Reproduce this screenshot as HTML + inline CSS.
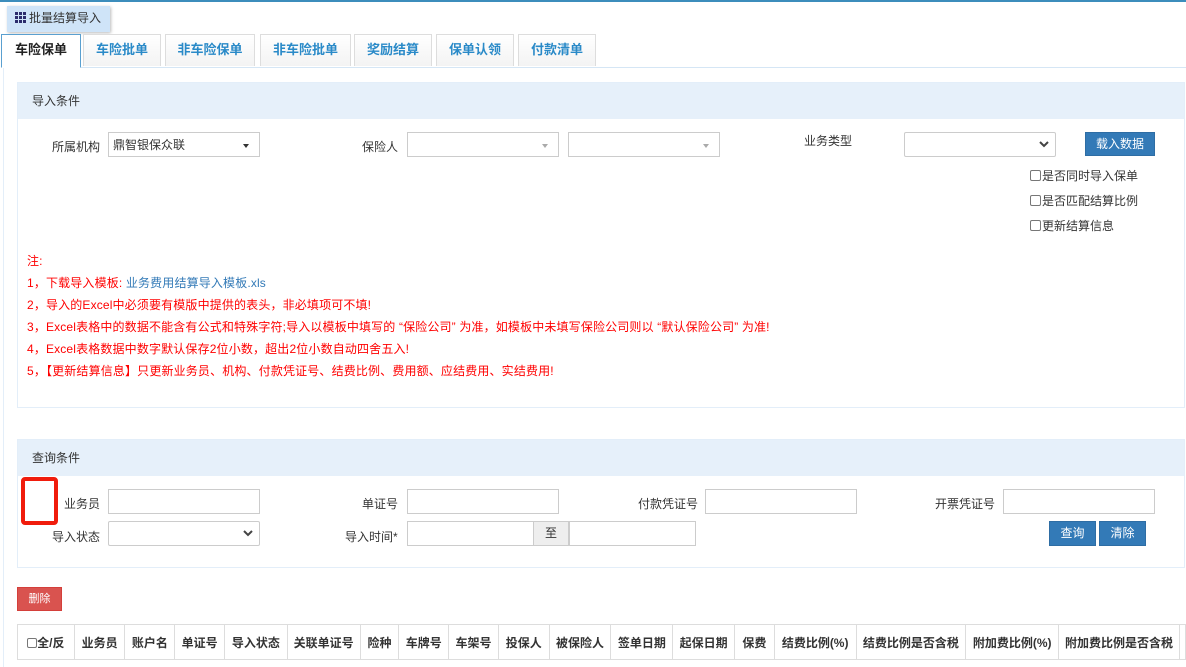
<!DOCTYPE html>
<html><head><meta charset="utf-8"><style>
*{margin:0;padding:0;box-sizing:border-box}
body{width:1186px;height:664px;overflow:hidden;background:#fff;font-family:"Liberation Sans","Noto Sans CJK SC",sans-serif;font-size:12px;color:#333;position:relative}
.a{position:absolute}
.inp{position:absolute;border:1px solid #ccc;background:#fff;height:25px}
.lbl{position:absolute;font-size:12px;color:#333;white-space:nowrap}
.tab{position:absolute;top:34px;height:32px;border:1px solid #ddd;border-bottom:none;background:linear-gradient(#fff,#f3f3f3);color:#2a8ac8;font-weight:bold;font-size:13px;text-align:center;line-height:30px}
.sec{position:absolute;left:17px;width:1168px;border:1px solid #e3eef9;background:#fff}
.sech{height:36px;background:#e6f0fa;padding-left:14px;line-height:36px;color:#333}
.btn{position:absolute;background:#337ab7;border:1px solid #2e6da4;color:#fff;text-align:center;line-height:22px;font-size:12px}
.cb{position:absolute;font-size:12px;white-space:nowrap}
.cb i{display:inline-block;width:11px;height:11px;border:1px solid #777;border-radius:2px;vertical-align:-1px;margin-right:1px}
.note{position:absolute;left:27px;color:#f00;font-size:12px;white-space:nowrap;letter-spacing:0.15px}
table{position:absolute;left:17px;top:624px;border-collapse:collapse}
td{border:1px solid #ddd;height:35px;text-align:center;font-weight:bold;font-size:12px;white-space:nowrap;padding:0}
.caret{position:absolute;right:10px;top:11px;border:3px solid transparent;border-top:4px solid #333;border-bottom:0}
.chev{position:absolute;right:6px;top:8px}
</style></head><body>
<div class="a" style="left:0;top:0;width:1186px;height:2px;background:#3c8dbc"></div>
<div class="a" style="left:7px;top:6px;width:103px;height:26px;background:#cfe4f8;box-shadow:1px 1px 3px #bbb;line-height:25px;padding-left:8px;font-size:12px">
<svg width="11" height="11" style="vertical-align:-1px;margin-right:3px"><g fill="#2c2c6c"><rect x="0" y="0" width="3" height="3"/><rect x="4" y="0" width="3" height="3"/><rect x="8" y="0" width="3" height="3"/><rect x="0" y="4" width="3" height="3"/><rect x="4" y="4" width="3" height="3"/><rect x="8" y="4" width="3" height="3"/><rect x="0" y="8" width="3" height="3"/><rect x="4" y="8" width="3" height="3"/><rect x="8" y="8" width="3" height="3"/></g></svg>批量结算导入</div>

<div class="a" style="left:3px;top:67px;width:1183px;height:600px;border-left:1px solid #e3eef9;border-top:1px solid #d5e6f5"></div>
<div class="tab" style="left:1px;width:80px;background:#fff;color:#222;border-color:#5aa0d0;border-bottom:1px solid #fff;height:34px">车险保单</div>
<div class="tab" style="left:83px;width:78px">车险批单</div>
<div class="tab" style="left:165px;width:90px">非车险保单</div>
<div class="tab" style="left:260px;width:91px">非车险批单</div>
<div class="tab" style="left:354px;width:78px">奖励结算</div>
<div class="tab" style="left:436px;width:78px">保单认领</div>
<div class="tab" style="left:518px;width:78px">付款清单</div>

<div class="sec" style="top:82px;height:326px"><div class="sech">导入条件</div></div>
<div class="lbl" style="left:52px;top:138px">所属机构</div>
<div class="inp" style="left:108px;top:132px;width:152px;padding:3px 4px">鼎智银保众联<span class="caret"></span></div>
<div class="lbl" style="left:362px;top:138px">保险人</div>
<div class="inp" style="left:407px;top:132px;width:152px"><span class="caret" style="border-top-color:#aaa"></span></div>
<div class="inp" style="left:568px;top:132px;width:152px"><span class="caret" style="border-top-color:#aaa"></span></div>
<div class="lbl" style="left:804px;top:132px">业务类型</div>
<div class="inp" style="left:904px;top:132px;width:152px;border-radius:2px"><svg class="chev" width="10" height="7"><polyline points="1,1 5,5 9,1" fill="none" stroke="#444" stroke-width="2"/></svg></div>
<div class="btn" style="left:1085px;top:132px;width:70px;height:24px">载入数据</div>
<div class="cb" style="left:1030px;top:167px"><i></i>是否同时导入保单</div>
<div class="cb" style="left:1030px;top:192px"><i></i>是否匹配结算比例</div>
<div class="cb" style="left:1030px;top:217px"><i></i>更新结算信息</div>

<div class="note" style="top:252px">注:</div>
<div class="note" style="top:274px">1，下载导入模板: <span style="color:#337ab7">业务费用结算导入模板.xls</span></div>
<div class="note" style="top:296px">2，导入的Excel中必须要有模版中提供的表头，非必填项可不填!</div>
<div class="note" style="top:318px">3，Excel表格中的数据不能含有公式和特殊字符;导入以模板中填写的 “保险公司” 为准，如模板中未填写保险公司则以 “默认保险公司” 为准!</div>
<div class="note" style="top:340px">4，Excel表格数据中数字默认保存2位小数，超出2位小数自动四舍五入!</div>
<div class="note" style="top:362px">5，【更新结算信息】只更新业务员、机构、付款凭证号、结费比例、费用额、应结费用、实结费用!</div>

<div class="sec" style="top:439px;height:129px"><div class="sech">查询条件</div></div>
<div class="a" style="left:21px;top:477px;width:37px;height:48px;border:4px solid #f01c0c;border-radius:4px"></div>
<div class="lbl" style="left:64px;top:495px">业务员</div>
<div class="inp" style="left:108px;top:489px;width:152px"></div>
<div class="lbl" style="left:362px;top:495px">单证号</div>
<div class="inp" style="left:407px;top:489px;width:152px"></div>
<div class="lbl" style="left:638px;top:495px">付款凭证号</div>
<div class="inp" style="left:705px;top:489px;width:152px"></div>
<div class="lbl" style="left:935px;top:495px">开票凭证号</div>
<div class="inp" style="left:1003px;top:489px;width:152px"></div>
<div class="lbl" style="left:52px;top:528px">导入状态</div>
<div class="inp" style="left:108px;top:521px;width:152px;border-radius:2px"><svg class="chev" width="10" height="7"><polyline points="1,1 5,5 9,1" fill="none" stroke="#444" stroke-width="2"/></svg></div>
<div class="lbl" style="left:345px;top:528px">导入时间*</div>
<div class="inp" style="left:407px;top:521px;width:127px"></div>
<div class="inp" style="left:533px;top:521px;width:36px;background:#eee;text-align:center;line-height:23px">至</div>
<div class="inp" style="left:569px;top:521px;width:127px"></div>
<div class="btn" style="left:1049px;top:521px;width:47px;height:25px">查询</div>
<div class="btn" style="left:1099px;top:521px;width:47px;height:25px">清除</div>

<div class="a" style="left:17px;top:587px;width:45px;height:24px;background:#d9534f;border:1px solid #d43f3a;color:#fff;text-align:center;line-height:22px;font-size:11px">删除</div>

<table><tr>
<td style="width:57px"><span style="display:inline-block;width:10px;height:10px;border:1px solid #777;border-radius:2px;vertical-align:-1px"></span>全/反</td>
<td style="width:51px">业务员</td><td style="width:50px">账户名</td><td style="width:50px">单证号</td><td style="width:63px">导入状态</td><td style="width:73px">关联单证号</td><td style="width:39px">险种</td><td style="width:50px">车牌号</td><td style="width:50px">车架号</td><td style="width:51px">投保人</td><td style="width:62px">被保险人</td><td style="width:62px">签单日期</td><td style="width:62px">起保日期</td><td style="width:40px">保费</td><td style="width:82px">结费比例(%)</td><td style="width:110px">结费比例是否含税</td><td style="width:93px">附加费比例(%)</td><td style="width:121px">附加费比例是否含税</td><td style="width:6px"></td>
</tr></table>
</body></html>
